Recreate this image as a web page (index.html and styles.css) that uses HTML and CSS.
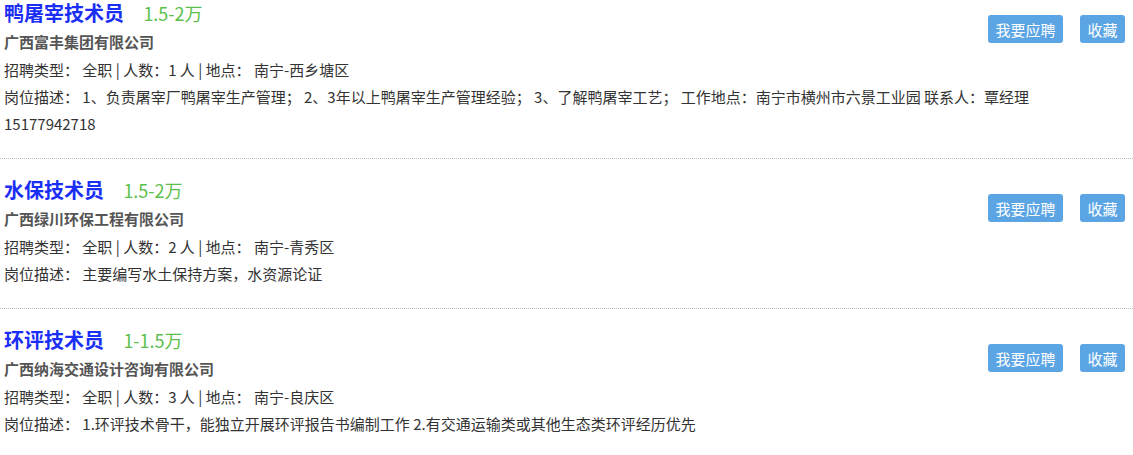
FILE: index.html
```html
<!DOCTYPE html>
<html lang="zh-CN">
<head>
    <meta charset="UTF-8">
    <meta name="viewport" content="width=device-width, initial-scale=1.0">
    <title>招聘信息</title>
    <link rel="stylesheet" href="styles.css">
</head>
<body>
    <div class="job-list">
        <div class="job-item">
            <div class="job-actions">
                <a href="#" class="btn btn-apply">我要应聘</a>
                <a href="#" class="btn btn-fav">收藏</a>
            </div>
            <div class="job-title">
                <a href="#" class="job-name">鸭屠宰技术员</a>
                <span class="job-salary">1.5-2万</span>
            </div>
            <div class="job-company">广西富丰集团有限公司</div>
            <div class="job-line">招聘类型： 全职 | 人数：1 人 | 地点： 南宁-西乡塘区</div>
            <div class="job-line">岗位描述： 1、负责屠宰厂鸭屠宰生产管理； 2、3年以上鸭屠宰生产管理经验； 3、了解鸭屠宰工艺； 工作地点：南宁市横州市六景工业园 联系人：覃经理 15177942718</div>
        </div>

        <div class="job-item">
            <div class="job-actions">
                <a href="#" class="btn btn-apply">我要应聘</a>
                <a href="#" class="btn btn-fav">收藏</a>
            </div>
            <div class="job-title">
                <a href="#" class="job-name">水保技术员</a>
                <span class="job-salary">1.5-2万</span>
            </div>
            <div class="job-company">广西绿川环保工程有限公司</div>
            <div class="job-line">招聘类型： 全职 | 人数：2 人 | 地点： 南宁-青秀区</div>
            <div class="job-line">岗位描述： 主要编写水土保持方案，水资源论证</div>
        </div>

        <div class="job-item">
            <div class="job-actions">
                <a href="#" class="btn btn-apply">我要应聘</a>
                <a href="#" class="btn btn-fav">收藏</a>
            </div>
            <div class="job-title">
                <a href="#" class="job-name">环评技术员</a>
                <span class="job-salary">1-1.5万</span>
            </div>
            <div class="job-company">广西纳海交通设计咨询有限公司</div>
            <div class="job-line">招聘类型： 全职 | 人数：3 人 | 地点： 南宁-良庆区</div>
            <div class="job-line">岗位描述： 1.环评技术骨干，能独立开展环评报告书编制工作 2.有交通运输类或其他生态类环评经历优先</div>
        </div>
    </div>
</body>
</html>
```

FILE: styles.css
```css
body {
    margin: 0;
    font-family: "Noto Sans CJK SC", "Microsoft YaHei", sans-serif;
    font-size: 15px;
    color: #333;
    background-color: #fff;
}

.job-item {
    padding: 18px 8px 21px 4px;
    border-bottom: 1px dotted #bbb;
}

.job-item:first-child {
    padding-top: 0;
}

.job-item:last-child {
    border-bottom: none;
}

.job-actions {
    float: right;
    display: flex;
    gap: 17px;
    margin-top: 17px;
}

.job-item:first-child .job-actions {
    margin-top: 15px;
}

.btn {
    display: flex;
    justify-content: center;
    align-items: center;
    height: 28px;
    background-color: #5ca5e4;
    color: #fff;
    font-size: 15px;
    border-radius: 3px;
    text-decoration: none;
}

.btn-apply {
    width: 75px;
}

.btn-fav {
    width: 45px;
}

.job-title {
    line-height: 25px;
}

.job-name {
    font-size: 20px;
    font-weight: bold;
    color: #1b2ef5;
    text-decoration: none;
}

.job-salary {
    margin-left: 16px;
    font-size: 18px;
    color: #5cbf4c;
}

.job-company {
    line-height: 29px;
    font-weight: bold;
    color: #555;
}

.job-line {
    max-width: 1090px;
    line-height: 27px;
}
```
